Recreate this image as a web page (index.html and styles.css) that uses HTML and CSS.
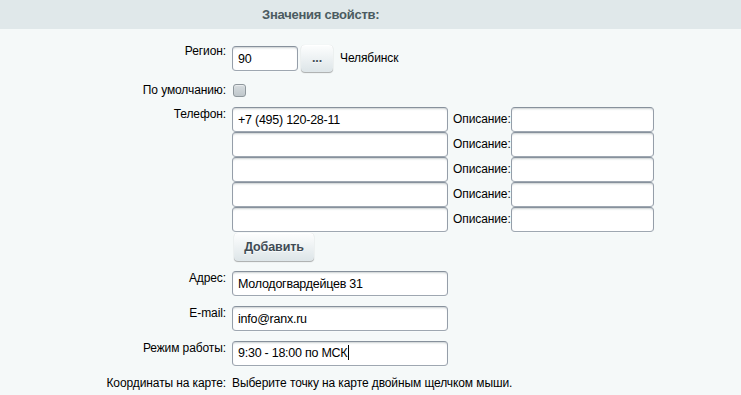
FILE: index.html
```html
<!DOCTYPE html>
<html lang="ru">
<head>
    <meta charset="UTF-8">
    <title>Значения свойств</title>
    <link rel="stylesheet" href="styles.css">
</head>
<body>
    <div class="header">Значения свойств:</div>

    <div class="form">
        <div class="row row-region">
            <div class="label">Регион:</div>
            <div class="field field-inline">
                <input type="text" class="input input-region" value="90">
                <button class="btn btn-dots">...</button>
                <span class="city">Челябинск</span>
            </div>
        </div>

        <div class="row row-check">
            <div class="label">По умолчанию:</div>
            <div class="field"><span class="checkbox"></span></div>
        </div>

        <div class="row">
            <div class="label">Телефон:</div>
            <div class="field">
                <div class="phone-line">
                    <input type="text" class="input input-wide" value="+7 (495) 120-28-11">
                    <span class="desc-label">Описание:</span>
                    <input type="text" class="input input-desc">
                </div>
                <div class="phone-line">
                    <input type="text" class="input input-wide">
                    <span class="desc-label">Описание:</span>
                    <input type="text" class="input input-desc">
                </div>
                <div class="phone-line">
                    <input type="text" class="input input-wide">
                    <span class="desc-label">Описание:</span>
                    <input type="text" class="input input-desc">
                </div>
                <div class="phone-line">
                    <input type="text" class="input input-wide">
                    <span class="desc-label">Описание:</span>
                    <input type="text" class="input input-desc">
                </div>
                <div class="phone-line">
                    <input type="text" class="input input-wide">
                    <span class="desc-label">Описание:</span>
                    <input type="text" class="input input-desc">
                </div>
                <button class="btn btn-add">Добавить</button>
            </div>
        </div>

        <div class="row">
            <div class="label">Адрес:</div>
            <div class="field"><input type="text" class="input input-wide" value="Молодогвардейцев 31"></div>
        </div>

        <div class="row">
            <div class="label">E-mail:</div>
            <div class="field"><input type="text" class="input input-wide" value="info@ranx.ru"></div>
        </div>

        <div class="row">
            <div class="label">Режим работы:</div>
            <div class="field">
                <div class="input input-wide input-focused">9:30 - 18:00 по МСК<span class="caret"></span></div>
            </div>
        </div>

        <div class="row">
            <div class="label">Координаты на карте:</div>
            <div class="field">Выберите точку на карте двойным щелчком мыши.</div>
        </div>
    </div>
</body>
</html>
```

FILE: styles.css
```css
* {
    box-sizing: border-box;
}

body {
    margin: 0;
    background-color: #f5f9f9;
    font-family: "Liberation Sans", Arial, sans-serif;
    font-size: 12px;
    letter-spacing: -0.1px;
    color: #000;
}

.header {
    height: 29px;
    line-height: 29px;
    padding-left: 262px;
    background-color: #e0e8ea;
    color: #4b5b61;
    font-size: 13px;
    font-weight: bold;
    letter-spacing: -0.25px;
}

.form {
    display: flex;
    flex-direction: column;
    gap: 10px;
    padding-top: 15px;
}

.row {
    display: grid;
    grid-template-columns: 226px 1fr;
    column-gap: 6px;
    line-height: 15px;
}

.row-region {
    margin-bottom: 2px;
}

.row-check {
    align-items: center;
    line-height: 13px;
}

.label {
    text-align: right;
}

.field-inline {
    display: flex;
    align-items: center;
}

.input {
    height: 25px;
    margin: 0;
    padding: 0 5px;
    border: 1px solid;
    border-color: #87919c #959ea9 #9ea7b1 #959ea9;
    border-radius: 4px;
    background-color: #fff;
    box-shadow: 0 1px 0 0 rgba(255, 255, 255, 0.3), inset 0 2px 2px -1px rgba(180, 188, 191, 0.7);
    font-family: inherit;
    font-size: 12.5px;
    letter-spacing: -0.25px;
    color: #000;
    outline: none;
    display: block;
}

.input-focused {
    line-height: 23px;
    white-space: nowrap;
}

.input-region {
    width: 66px;
    margin-top: 2px;
    margin-bottom: 1px;
}

.input-wide {
    width: 216px;
}

.input-desc {
    width: 143px;
}

.btn {
    border: none;
    border-radius: 4px;
    background-image: linear-gradient(to bottom, #fdfefe, #dde5e8);
    box-shadow: 0 0 1px rgba(0, 0, 0, 0.11), 0 1px 1px rgba(0, 0, 0, 0.3), inset 0 1px #fff, inset 0 0 1px rgba(255, 255, 255, 0.5);
    color: #3f4b54;
    font-family: inherit;
    font-size: 12.5px;
    font-weight: bold;
    letter-spacing: -0.1px;
    text-shadow: 0 1px rgba(255, 255, 255, 0.7);
    cursor: pointer;
    padding: 0;
}

.btn-dots {
    width: 32px;
    height: 27px;
    margin-left: 3px;
    line-height: 27px;
}

.city {
    margin-left: 7px;
}

.checkbox {
    display: block;
    width: 13px;
    height: 13px;
    margin-left: 1px;
    border: 1px solid #8e979c;
    border-radius: 3px;
    background-image: linear-gradient(to bottom, #d6dcdf, #bfc7cb);
    box-shadow: inset 0 1px 1px rgba(255, 255, 255, 0.5);
}

.phone-line {
    display: flex;
    align-items: center;
}

.desc-label {
    margin-left: 5px;
    width: 58px;
}

.btn-add {
    width: 80px;
    height: 28px;
    margin: 1px 0 0 2px;
}

.caret {
    display: inline-block;
    width: 1px;
    height: 15px;
    margin-left: 1px;
    vertical-align: -3px;
    background-color: #000;
}
```
